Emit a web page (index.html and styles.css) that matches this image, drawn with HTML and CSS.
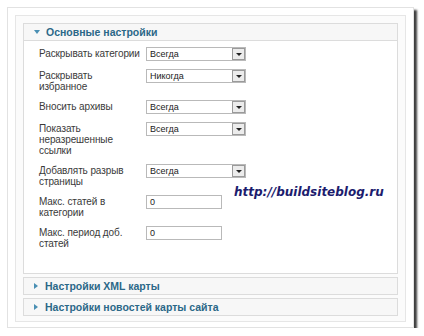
FILE: index.html
```html
<!DOCTYPE html>
<html lang="ru">
<head>
    <meta charset="UTF-8">
    <meta name="viewport" content="width=device-width, initial-scale=1.0">
    <title>Параметры карты сайта</title>
    <link rel="stylesheet" href="styles.css">
</head>
<body>
    <div class="paper">
        <div class="frame">
            <!-- основные настройки -->
            <div class="pane">
                <div class="pane-head open"><span class="arrow"></span>Основные настройки</div>
                <div class="pane-body">
                    <div class="row">
                        <div class="label">Раскрывать категории</div>
                        <div class="select"><span class="value">Всегда</span><span class="btn"></span></div>
                    </div>
                    <div class="row">
                        <div class="label">Раскрывать<br>избранное</div>
                        <div class="select"><span class="value">Никогда</span><span class="btn"></span></div>
                    </div>
                    <div class="row">
                        <div class="label">Вносить архивы</div>
                        <div class="select"><span class="value">Всегда</span><span class="btn"></span></div>
                    </div>
                    <div class="row">
                        <div class="label">Показать<br>неразрешенные<br>ссылки</div>
                        <div class="select"><span class="value">Всегда</span><span class="btn"></span></div>
                    </div>
                    <div class="row">
                        <div class="label">Добавлять разрыв<br>страницы</div>
                        <div class="select"><span class="value">Всегда</span><span class="btn"></span></div>
                    </div>
                    <div class="row">
                        <div class="label">Макс. статей в<br>категории</div>
                        <div class="input">0</div>
                    </div>
                    <div class="row">
                        <div class="label">Макс. период доб.<br>статей</div>
                        <div class="input">0</div>
                    </div>

                    <div class="watermark">http://buildsiteblog.ru</div>
                </div>
            </div>

            <div class="pane">
                <div class="pane-head"><span class="arrow"></span>Настройки XML карты</div>
            </div>

            <div class="pane">
                <div class="pane-head"><span class="arrow"></span>Настройки новостей карты сайта</div>
            </div>
        </div>
    </div>
</body>
</html>
```

FILE: styles.css
```css
* {
    margin: 0;
    padding: 0;
    box-sizing: border-box;
}

body {
    background-color: #fff;
    font-family: "Liberation Sans", Arial, sans-serif;
}

.paper {
    margin: 7px 0 0 7px;
    width: 407px;
    padding: 7px 7px 5px 7px;
    border: 1px solid #e2e2e2;
    background-color: #fff;
    box-shadow: 3px 3px 2px #3f3f3f;
}

.frame {
    padding: 7px 7px 5px 7px;
    border: 1px solid #e6e6e6;
    background-color: #fbfbfb;
}

.pane {
    border: 1px solid #dcdcdc;
    background-color: #fff;
    margin-top: 3px;
}

.pane:first-child {
    margin-top: 0;
}

.pane-head {
    height: 16px;
    display: flex;
    align-items: center;
    padding-left: 10px;
    background-color: #f7f7f7;
    color: #2b6888;
    font-size: 10.5px;
    font-weight: bold;
}

.pane-head.open {
    border-bottom: 1px solid #dcdcdc;
    height: 17px;
}

.arrow {
    width: 0;
    height: 0;
    margin-right: 7px;
    border-top: 3px solid transparent;
    border-bottom: 3px solid transparent;
    border-left: 4px solid #4a8fb3;
}

.open .arrow {
    border-left: 3px solid transparent;
    border-right: 3px solid transparent;
    border-top: 4px solid #4a8fb3;
    border-bottom: none;
    margin-right: 6px;
}

.pane-body {
    position: relative;
    height: 232px;
    padding: 6px 0 0 15px;
    display: flex;
    flex-direction: column;
    gap: 8px;
}

.row {
    display: flex;
    align-items: flex-start;
}

.label {
    width: 107px;
    padding-top: 1px;
    font-size: 10px;
    line-height: 11px;
    letter-spacing: -0.1px;
    white-space: nowrap;
    color: #3a3a3a;
}

.select {
    width: 100px;
    height: 14px;
    display: flex;
    border: 1px solid #b9b9b9;
    background-color: #fff;
}

.value {
    flex: 1;
    padding-left: 3px;
    font-size: 9px;
    line-height: 12px;
    color: #222;
}

.btn {
    width: 13px;
    height: 12px;
    border: 1px solid #9a9a9a;
    background-color: #ececec;
    display: flex;
    align-items: center;
    justify-content: center;
}

.btn::after {
    content: "";
    border-left: 3px solid transparent;
    border-right: 3px solid transparent;
    border-top: 3px solid #222;
}

.input {
    width: 76px;
    height: 14px;
    border: 1px solid #b9b9b9;
    padding-left: 3px;
    font-size: 9px;
    line-height: 12px;
    color: #222;
}

.watermark {
    position: absolute;
    left: 210px;
    top: 144px;
    font-family: "DejaVu Sans", sans-serif;
    font-size: 12px;
    font-weight: bold;
    font-style: italic;
    color: #1c1c6e;
}
```
